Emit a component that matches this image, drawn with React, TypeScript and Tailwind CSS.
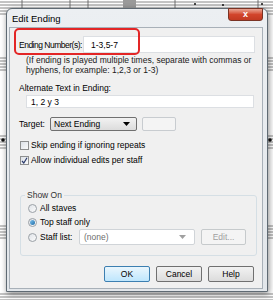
import React from "react";

const font = { fontFamily: '"Liberation Sans", Arial, sans-serif' };

function SheetMusic() {
  const staves = [2, 58, 136, 226, 294];
  return (
    <svg className="absolute inset-0" width="273" height="300" viewBox="0 0 273 300">
      <rect width="273" height="300" fill="#ffffff" />
      {staves.map((y) =>
        [0, 3, 6, 9, 12].map((d) => (
          <line key={`${y}-${d}`} x1="0" x2="273" y1={y + d} y2={y + d} stroke="#6b6b6b" strokeWidth="0.8" />
        ))
      )}
      {[22, 70, 88, 175, 258].map((x) => (
        <line key={x} x1={x} x2={x} y1="0" y2="14" stroke="#555" strokeWidth="0.8" />
      ))}
      <rect x="123" y="0" width="13" height="9" fill="#9a9a9a" />
      <circle cx="3" cy="140" r="1.8" fill="#111" />
      <circle cx="270" cy="140" r="1.8" fill="#111" />
      <circle cx="195" cy="4" r="1" fill="#111" />
      <circle cx="223" cy="5" r="1" fill="#111" />
      <circle cx="262" cy="4" r="1" fill="#111" />
    </svg>
  );
}

function Arrow({ color = "#000" }: { color?: string }) {
  return (
    <svg width="7" height="4" viewBox="0 0 7 4">
      <path d="M0 0 L7 0 L3.5 4 Z" fill={color} />
    </svg>
  );
}

function Checkbox({ checked }: { checked?: boolean }) {
  return (
    <span className="flex h-[9px] w-[9px] shrink-0 items-center justify-center border border-[#8e8f8f] bg-gradient-to-br from-[#dde1e7] to-[#fafafa]">
      {checked && (
        <svg width="7" height="7" viewBox="0 0 7 7">
          <path d="M1 4 L2.8 6 L6 0.8" stroke="#2a3a6a" strokeWidth="1.2" fill="none" />
        </svg>
      )}
    </span>
  );
}

function Radio({ checked }: { checked?: boolean }) {
  return (
    <span className="flex h-[9px] w-[9px] shrink-0 items-center justify-center rounded-full border border-[#9aa0a6] bg-gradient-to-br from-[#dfe3e8] to-[#fbfbfb]">
      {checked && <span className="h-[5px] w-[5px] rounded-full bg-gradient-to-br from-[#7fc3ef] to-[#1a6ea8]" />}
    </span>
  );
}

function Button({ children, primary, disabled, w = "w-[46px]" }: { children: React.ReactNode; primary?: boolean; disabled?: boolean; w?: string }) {
  return (
    <div
      className={`flex h-[16px] ${w} items-center justify-center rounded-[2px] border text-[8.5px] ${
        primary
          ? "border-[#3c7fb1] bg-gradient-to-b from-[#eaf6fd] to-[#bee6fd] text-black"
          : disabled
          ? "border-[#c6cacc] bg-[#f4f4f4] text-[#a0a0a0]"
          : "border-[#707070] bg-gradient-to-b from-[#f2f2f2] to-[#dcdcdc] text-black"
      }`}
    >
      {children}
    </div>
  );
}

export default function App() {
  return (
    <div className="relative h-[300px] w-[273px] overflow-hidden bg-white" style={font}>
      <SheetMusic />
      {/* Dialog window */}
      <div className="absolute left-[6px] top-[8px] flex h-[284px] w-[262px] flex-col rounded-t-[6px] border border-[#5f6a73] bg-gradient-to-b from-[#eceff2] to-[#e2e6ea] shadow-[1px_2px_6px_rgba(0,0,0,0.45)]">
        <div className="flex h-[18px] shrink-0 items-start justify-between pl-[5px] pr-[4px]">
          <span className="mt-[4px] text-[9.5px] leading-[11px] text-black">Edit Ending</span>
          <div className="mt-[-1px] flex h-[13px] w-[35px] items-center justify-center rounded-b-[3px] border border-[#7a3324] bg-gradient-to-b from-[#e8a493] via-[#d2452c] to-[#c23a22]">
            <span className="text-[9px] font-bold leading-none text-white">x</span>
          </div>
        </div>
        {/* Client area */}
        <div className="mb-[2px] ml-[2px] mr-[4px] flex flex-1 flex-col whitespace-nowrap border border-[#a8b0b8] bg-[#f0f0f0] text-[8.5px] leading-[10px] text-black">
          <div className="mt-[8px] flex h-[17px] shrink-0 items-center pl-[9px]">
            <span className="w-[64px] tracking-[-0.5px]">Ending Number(s):</span>
            <div className="flex h-[17px] w-[172px] items-center border border-[#dcdfe3] bg-white pl-[7px]">1-3,5-7</div>
          </div>
          <div className="mt-[2px] pl-[16px] text-[#1a1a1a]">
            <div>(If ending is played multiple times, separate with commas or</div>
            <div>hyphens, for example: 1,2,3 or 1-3)</div>
          </div>
          <div className="mt-[8px] pl-[9px]">Alternate Text in Ending:</div>
          <div className="ml-[16px] mt-[2px] flex h-[13px] w-[228px] shrink-0 items-center border border-[#dcdfe3] bg-white pl-[4px]">1, 2 y 3</div>
          <div className="mt-[9px] flex h-[14px] shrink-0 items-center pl-[9px]">
            <span className="w-[31px]">Target:</span>
            <div className="flex h-[14px] w-[87px] items-center justify-between rounded-[2px] border border-[#707070] bg-gradient-to-b from-[#f2f2f2] to-[#dcdcdc] pl-[3px] pr-[6px]">
              <span>Next Ending</span>
              <Arrow />
            </div>
            <div className="ml-[5px] h-[14px] w-[34px] rounded-[2px] border border-[#c8ccd0] bg-[#f4f4f4]" />
          </div>
          <div className="mt-[9px] flex h-[10px] shrink-0 items-center gap-[2px] pl-[10px]">
            <Checkbox />
            <span>Skip ending if ignoring repeats</span>
          </div>
          <div className="mt-[5px] flex h-[10px] shrink-0 items-center gap-[2px] pl-[10px]">
            <Checkbox checked />
            <span>Allow individual edits per staff</span>
          </div>
          {/* Group box */}
          <div className="relative ml-[10px] mt-[30px] flex h-[61px] w-[237px] shrink-0 flex-col rounded-[3px] border border-[#d5dfe5] pl-[7px] pt-[7px]">
            <span className="absolute left-[4px] top-[-6px] bg-[#f0f0f0] px-[2px] text-[#333]">Show On</span>
            <div className="flex h-[10px] items-center gap-[3px]">
              <Radio />
              <span>All staves</span>
            </div>
            <div className="mt-[4px] flex h-[10px] items-center gap-[3px]">
              <Radio checked />
              <span>Top staff only</span>
            </div>
            <div className="mt-[2px] flex h-[16px] items-center">
              <Radio />
              <span className="ml-[3px] w-[39px]">Staff list:</span>
              <div className="flex h-[16px] w-[116px] items-center justify-between rounded-[2px] border border-[#d0d4d8] bg-white pl-[4px] pr-[8px] text-[#6d6d6d]">
                <span>(none)</span>
                <Arrow color="#a0a0a0" />
              </div>
              <div className="ml-[6px]">
                <Button disabled w="w-[45px]">Edit...</Button>
              </div>
            </div>
          </div>
          <div className="mt-[10px] flex justify-end gap-[6px] pr-[8px]">
            <Button primary>OK</Button>
            <Button>Cancel</Button>
            <Button>Help</Button>
          </div>
        </div>
      </div>
      {/* Red annotation */}
      <div className="absolute left-[14px] top-[28px] h-[27px] w-[126px] rounded-[5px] border-2 border-[#e32626]" />
    </div>
  );
}
